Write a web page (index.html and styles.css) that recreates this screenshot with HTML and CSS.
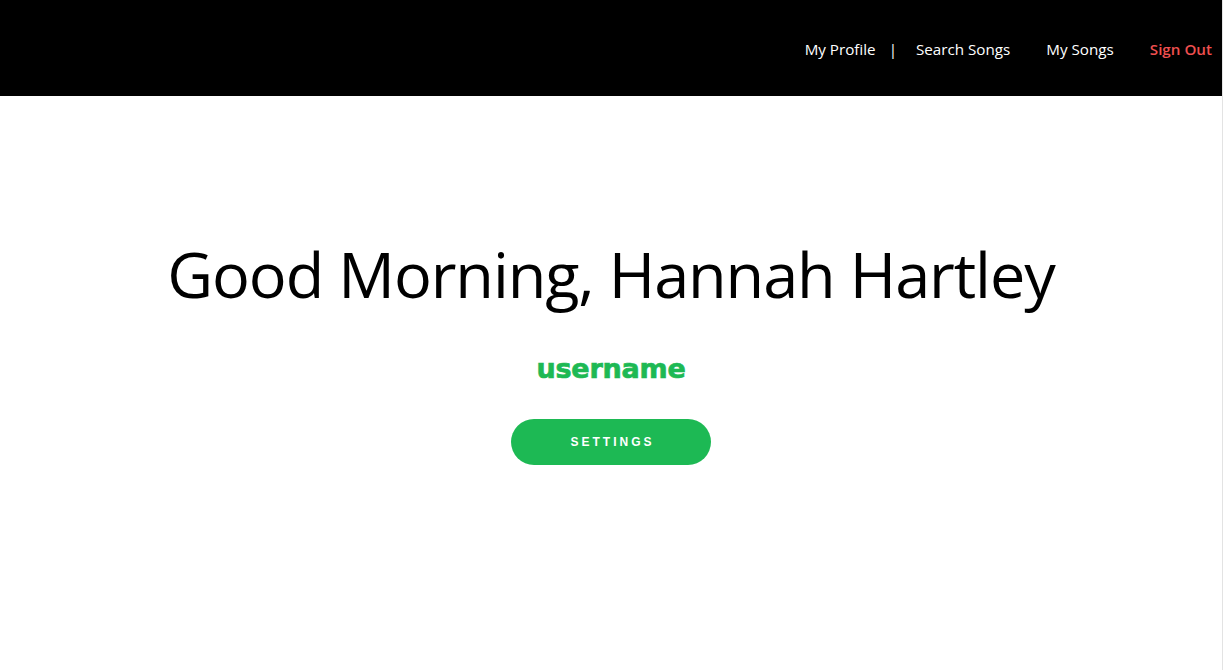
FILE: index.html
```html
<!DOCTYPE html>
<html>
<head>
<meta charset="utf-8">
<link rel="stylesheet" href="styles.css">
</head>
<body>
<div class="page">
  <header class="topbar">
    <nav class="nav">
      <a class="nav-link">My Profile</a>
      <span class="sep">|</span>
      <a class="nav-link">Search Songs</a>
      <a class="nav-link">My Songs</a>
      <a class="nav-link signout">Sign Out</a>
    </nav>
  </header>
  <main class="content">
    <h1 class="greeting">Good Morning, Hannah Hartley</h1>
    <h2 class="username">username</h2>
    <button class="settings">SETTINGS</button>
  </main>
</div>
</body>
</html>
```
FILE: styles.css
```css
html, body {
  margin: 0;
  padding: 0;
  background: #ffffff;
}
body {
  font-family: "Open Sans", "Noto Sans", sans-serif;
}
.page {
  width: 1222px;
  height: 670px;
  border-right: 1px solid #e3e3e3;
  box-sizing: content-box;
}
.topbar {
  height: 96px;
  background: #000000;
  display: flex;
  align-items: center;
  justify-content: flex-end;
}
.nav {
  display: flex;
  align-items: center;
  padding-right: 10px;
  padding-top: 2px;
}
.nav-link {
  color: #ffffff;
  font-size: 15.2px;
  margin-left: 36px;
  letter-spacing: 0;
}
.nav-link:first-child {
  margin-left: 0;
}
.sep {
  color: #ffffff;
  font-size: 15.2px;
  margin-left: 13px;
  margin-right: -17px;
}
.signout {
  color: #ef4f4f;
  font-weight: 600;
}
.content {
  display: flex;
  flex-direction: column;
  align-items: center;
}
.greeting {
  margin: 136px 0 0 0;
  font-weight: 400;
  font-size: 63px;
  line-height: 84px;
  color: #000000;
  letter-spacing: -1.1px;
}
.username {
  margin: 37px 0 0 0;
  font-family: "DejaVu Sans", Verdana, sans-serif;
  font-weight: 700;
  font-size: 27px;
  line-height: 32px;
  color: #1db954;
  letter-spacing: -0.2px;
  -webkit-text-stroke: 0.7px #1db954;
}
.settings {
  margin-top: 34px;
  width: 200px;
  height: 46px;
  border: none;
  border-radius: 23px;
  background: #1db954;
  color: #ffffff;
  font-family: "Liberation Sans", Arial, sans-serif;
  font-weight: 700;
  font-size: 12px;
  letter-spacing: 3px;
  padding: 0 0 0 3px;
}
```
